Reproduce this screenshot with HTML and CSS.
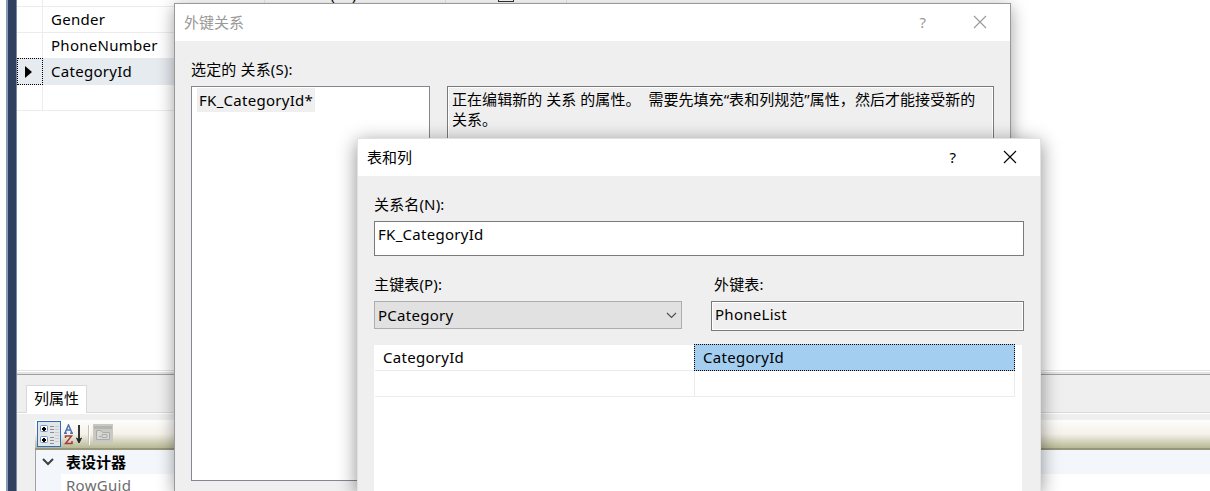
FILE: index.html
```html
<!DOCTYPE html>
<html lang="zh-CN">
<head>
<meta charset="utf-8">
<title>外键关系</title>
<link rel="stylesheet" href="styles.css">
</head>
<body>
<div class="app">
  <div class="edge"></div>
  <main class="workspace">
    <section class="columns">
      <div class="row first"><span class="mark"></span><span class="name"></span><span class="type">nvarchar(50)</span><span class="nulls"><i class="check"></i></span><span class="rest"></span></div>
      <div class="row"><span class="mark"></span><span class="name">Gender</span></div>
      <div class="row"><span class="mark"></span><span class="name">PhoneNumber</span></div>
      <div class="row current"><span class="mark"><svg width="7" height="12" viewBox="0 0 7 12"><path d="M0 0L7 6L0 12Z" fill="#000"/></svg></span><span class="name">CategoryId</span></div>
      <div class="row"><span class="mark"></span><span class="name"></span></div>
    </section>
    <div class="splitter"></div>
    <section class="properties">
      <div class="tabs"><span class="tab">列属性</span></div>
      <div class="panel">
        <div class="toolbar">
          <span class="tool active">
            <svg width="21" height="22" viewBox="0 0 21 22"><g fill="#fff" stroke="#7b93c4"><rect x="1.5" y="2.5" width="7" height="6" rx="1"/><rect x="1.5" y="13.5" width="7" height="6" rx="1"/></g><path d="M3 6h4M5 4v4M3 17h4M5 15v4" stroke="#000" stroke-width="2"/><path d="M11 3.5h4M11 6.5h4M11 9.5h4M11 14.5h4M11 17.5h4M11 20.5h4" stroke="#8c9092"/><path d="M16 3.5h4M16 6.5h4M16 9.5h4M16 12.5h4M16 15.5h4M16 18.5h4" stroke="#c5cccf"/></svg>
          </span>
          <svg class="sort" width="21" height="22" viewBox="0 0 21 22"><g fill="none" stroke-width="1.5"><path d="M1 9L4.5 1L8 9M2.5 6H6.5M0 9.3H3M6 9.3H9" stroke="#4b72b8"/><path d="M1.5 14V12H7.5L1.5 19.5H8V17" stroke="#a5393b"/></g><path d="M15 1V16" stroke="#333" stroke-width="2"/><path d="M12.500 14L15 19L17.500 14L15 16Z" fill="#222" stroke="#222"/></svg>
          <i class="divider"></i>
          <svg class="pages" width="20" height="19" viewBox="0 0 20 19"><path d="M0 0h20v19H0z" fill="#c9c9c4"/><path d="M1 3.5h18" stroke="#b4b4b0" stroke-width="3"/><path d="M3.5 15.500V6.500H8L9.500 8.500H16.500V15.500ZM6 12.500H8M9 10.500H14V13.500H9Z" fill="#d7d7d3" stroke="#aaaaa6"/></svg>
        </div>
        <div class="props">
          <div class="category"><svg width="12" height="8" viewBox="0 0 12 8"><path d="M1 1L6 6L11 1" fill="none" stroke="#404040" stroke-width="2"/></svg><b>表设计器</b></div>
          <div class="prop"><span>RowGuid</span></div>
        </div>
      </div>
    </section>
  </main>
</div>

<div class="dialog relations">
  <header class="titlebar"><span class="title">外键关系</span><span class="help">?</span><svg class="close" width="14" height="14" viewBox="0 0 14 14"><path d="M1 1L13 13M13 1L1 13"/></svg></header>
  <div class="content">
    <div class="pick"><label>选定的 关系(S):</label><div class="list"><span class="item">FK_CategoryId*</span></div></div>
    <div class="hint">正在编辑新的 关系 的属性。&nbsp; 需要先填充“表和列规范”属性，然后才能接受新的<br>关系。</div>
  </div>
</div>

<div class="dialog mapping">
  <header class="titlebar"><span class="title">表和列</span><span class="help">?</span><svg class="close" width="14" height="14" viewBox="0 0 14 14"><path d="M1 1L13 13M13 1L1 13"/></svg></header>
  <div class="form">
    <label>关系名(N):</label>
    <div class="input">FK_CategoryId</div>
    <div class="tables">
      <div class="primary"><label>主键表(P):</label><div class="select"><span>PCategory</span><svg width="11" height="7" viewBox="0 0 11 7"><path d="M1 1L5.500 5.500L10 1" fill="none" stroke="#505050" stroke-width="1.200"/></svg></div></div>
      <div class="foreign"><label>外键表:</label><div class="readonly">PhoneList</div></div>
    </div>
    <div class="pairs">
      <div class="cell">CategoryId</div><div class="cell selected">CategoryId</div>
      <div class="cell"></div><div class="cell"></div>
    </div>
  </div>
</div>
</body>
</html>
```
FILE: styles.css
```css
* { box-sizing: border-box; }
body { margin: 0; width: 1210px; height: 491px; overflow: hidden; position: relative; background: #fff; color: #000; font: 15px/20px "Noto Sans", "Noto Sans CJK SC", sans-serif; }
svg { display: block; flex: none; }
label { display: block; letter-spacing: .15px; }
.name, .item, .input, .select, .readonly, .cell, .prop { letter-spacing: .28px; }
.app { display: flex; height: 491px; padding-left: 6px; overflow: hidden; }
.edge { width: 11px; flex: none; background: #30405f; border-left: 2px solid #8c9bb5; border-right: 1px solid #7c89a1; }
.workspace { flex: 1; display: flex; flex-direction: column; min-width: 0; }

.columns { height: 370px; flex: none; overflow: hidden; }
.row { display: flex; height: 26px; width: 550px; border-bottom: 1px solid #ececec; }
.row.first { margin-top: -19px; }
.row .mark { width: 26px; flex: none; border-right: 1px solid #ececec; }
.row .name { width: 222px; padding: 2px 0 0 8px; border-right: 1px solid #ececec; }
.row .type { width: 181px; padding: 3px 0 0 3px; border-right: 1px solid #ececec; }
.row .nulls { width: 121px; padding: 5px 0 0 52px; border-right: 1px solid #ececec; }
.check { display: block; width: 16px; height: 16px; border: 1px solid #333; background: #fff; }
.row.current { height: 27px; margin-top: -1px; background: #e6ebf0; border: 0; position: relative; }
.row.current .mark { border: 1px dotted #000; display: flex; align-items: center; padding-left: 7px; }
.row.current .name { padding-top: 3px; border: 0; }
.splitter { height: 5px; flex: none; background: #e3e3e3; border-top: 1px solid #e3e3e3; border-bottom: 1px solid #a0a0a0; box-shadow: inset 0 1px #fff; }
.properties { flex: 1; min-height: 0; background: #efefef; }
.tabs { height: 38px; padding: 10px 0 0 9px; border-bottom: 1px solid #d9d9d9; }
.tab { display: block; width: 61px; height: 28px; padding: 2px 0 0 7px; background: #fff; border: 1px solid #d9d9d9; border-bottom: 0; }
.panel { border-top: 1px solid #fff; padding: 6px 0 0 18px; }
.toolbar { height: 30px; padding: 1px 0 0 2px; display: flex; background: linear-gradient(#fdfdfb, #f5f2ea 50%, #e6e4d6 62%, #b7b895); border-bottom: 2px solid #96967a; }
.tool.active { width: 24px; height: 26px; padding: 1px; background: #e1e6e8; border: 1px solid #316ac5; }
.sort { margin: 3px 0 0 3px; }
.divider { width: 1px; height: 20px; margin: 4px 4px 0; background: #fff; box-shadow: -1px 0 #c5c2b3; }
.pages { margin: 3px 0 0 -1px; }
.props { height: 41px; border-left: 1px solid #a0a0a0; background: #f3f7fc; }
.category { display: flex; align-items: center; height: 24px; padding-left: 6px; }
.category b { margin-left: 12px; }
.prop { height: 17px; margin-left: 25px; padding: 1px 0 0 5px; background: #fff; color: #6d6d6d; }

.dialog { position: absolute; background: #efefef; }
.titlebar { display: flex; align-items: center; background: #fff; height: 37px; }
.title, .help { padding-bottom: 2px; }
.help { margin-left: auto; }
.close { fill: none; stroke: currentColor; stroke-width: 1.100; margin: 0 0 1px 47px; }
.relations { left: 174px; top: 3px; width: 837px; height: 488px; border: 1px solid #999; border-bottom: 0; box-shadow: 0 4px 16px rgba(0,0,0,.38); }
.relations .titlebar { color: #999; padding: 0 23px 0 9px; }
.content { display: flex; padding: 18px 16px 0; }
.pick { width: 239px; }
.list { margin-top: 7px; height: 395px; background: #fff; border: 1px solid #828790; padding: 1px 5px; }
.item { display: inline-block; height: 24px; padding: 2px 2px 0 2px; background: #efefef; }
.hint { margin: 27px 0 0 17px; width: 547px; height: 395px; padding: 2px 0 0 4px; border: 1px solid #7a7a7a; box-shadow: inset 0 0 0 1px #fff; white-space: nowrap; letter-spacing: .05px; }
.mapping { left: 357px; top: 138px; width: 684px; height: 353px; border: 1px solid #e2e2e2; border-bottom: 0; box-shadow: 0 4px 18px rgba(0,0,0,.45); }
.mapping .titlebar { padding: 0 23px 0 9px; }
.form { padding: 18px 16px 0; }
.input { width: 650px; height: 35px; margin-top: 7px; padding: 2px 3px; background: #fff; border: 1px solid #7a7a7a; }
.tables { display: flex; margin-top: 18px; }
.select { display: flex; align-items: center; justify-content: space-between; width: 308px; height: 28px; margin-top: 7px; padding: 0 4px 0 3px; background: #e1e1e1; border: 1px solid #adadad; }
.foreign { margin-left: 29px; }
.foreign label { margin-left: 3px; }
.readonly { width: 313px; height: 30px; margin-top: 7px; padding: 2px 3px; border: 1px solid #7a7a7a; box-shadow: inset 0 0 0 1px #fff; }
.pairs { display: grid; grid-template-columns: 320px 320px; grid-template-rows: 26px 26px; width: 648px; height: 146px; margin-top: 14px; padding-left: 1px; background: #fff; align-content: start; }
.cell { border-right: 1px solid #ececec; border-bottom: 1px solid #ececec; padding: 2px 0 0 8px; }
.cell.selected { margin: -1px 0 0 -1px; border: 1px dotted #000; background: #a4cef0; }
```
